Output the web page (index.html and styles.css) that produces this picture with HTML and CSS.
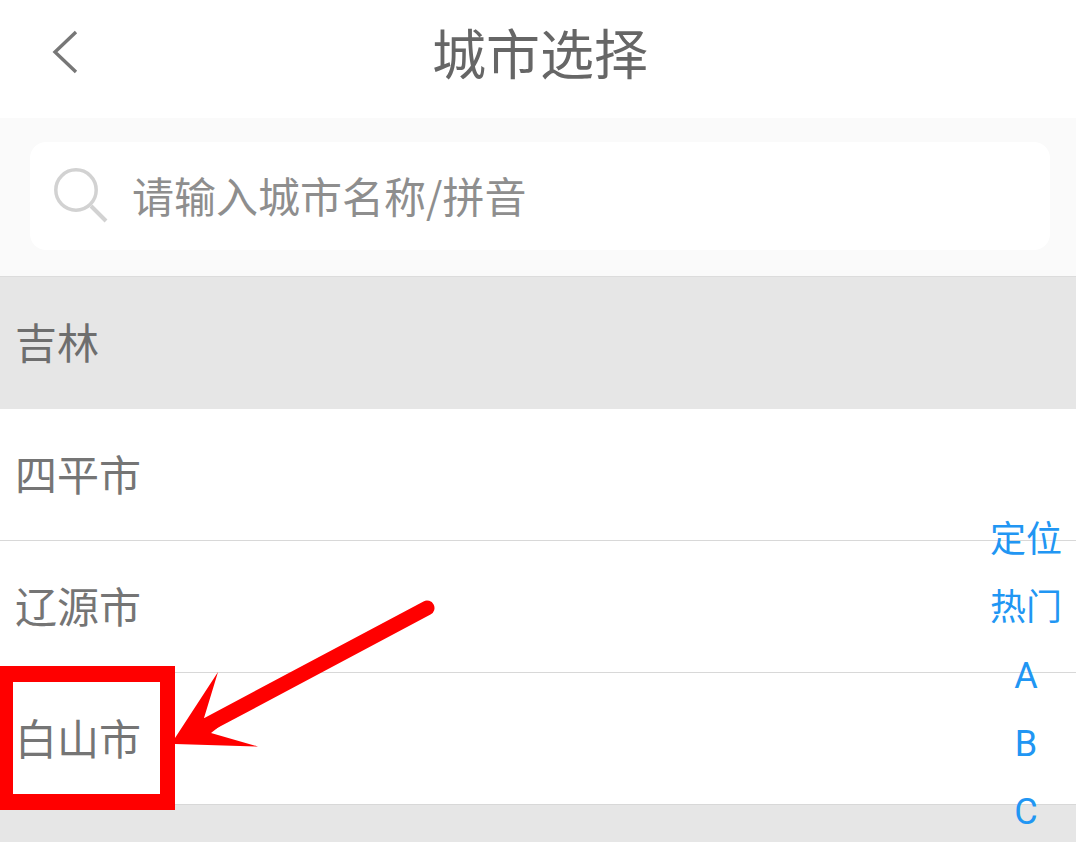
FILE: index.html
```html
<!DOCTYPE html>
<html lang="zh-CN">
<head>
    <meta charset="UTF-8">
    <meta name="viewport" content="width=device-width, initial-scale=1.0">
    <title>城市选择</title>
    <link rel="stylesheet" href="styles.css">
</head>
<body>
    <div class="page">
        <header class="top-bar">
            <svg class="back-icon" width="32" height="48" viewBox="0 0 32 48">
                <path d="M25 4 L4 24 L25 44" fill="none" stroke="#777" stroke-width="3.4"/>
            </svg>
            <h1>城市选择</h1>
        </header>

        <div class="search-area">
            <div class="search-box">
                <svg class="search-icon" width="56" height="56" viewBox="0 0 56 56">
                    <circle cx="22" cy="22" r="20.2" fill="none" stroke="#d2d2d2" stroke-width="3.5"/>
                    <path d="M37 38 L52 53" fill="none" stroke="#d2d2d2" stroke-width="4"/>
                </svg>
                <span class="search-text">请输入城市名称/拼音</span>
            </div>
        </div>

        <div class="city-list">
            <div class="group-title">吉林</div>
            <div class="city-row">四平市</div>
            <div class="city-row">辽源市</div>
            <div class="city-row">白山市</div>
            <div class="group-title"></div>
        </div>

        <!-- 右侧索引 -->
        <ul class="index-bar">
            <li>定位</li>
            <li>热门</li>
            <li>A</li>
            <li>B</li>
            <li>C</li>
        </ul>

        <!-- 红色标注 -->
        <svg class="mark" width="1076" height="842" viewBox="0 0 1076 842">
            <path d="M0 666 H175 V810 H0 Z M13 682 V794 H160 V682 Z" fill="#ff0000" fill-rule="evenodd"/>
            <path d="M427 608 L207 725" fill="none" stroke="#ff0000" stroke-width="15" stroke-linecap="round"/>
            <path d="M175 738 L218 672 L204 718 L225 722 L211 733 L258 746.5 L175 744 Z" fill="#ff0000"/>
        </svg>
    </div>
</body>
</html>
```

FILE: styles.css
```css
* {
    box-sizing: border-box;
}

body {
    margin: 0;
    padding: 0;
    background-color: #fff;
    font-family: "Noto Sans CJK SC", "Liberation Sans", sans-serif;
}

.page {
    position: relative;
    height: 842px;
    overflow: hidden;
}

.top-bar {
    position: relative;
    height: 118px;
    display: flex;
    align-items: center;
    justify-content: center;
    padding-left: 4px;
    padding-bottom: 14px;
    background-color: #fff;
}

.top-bar h1 {
    margin: 0;
    font-size: 54px;
    font-weight: 400;
    line-height: 104px;
    color: #666;
}

.back-icon {
    position: absolute;
    left: 51px;
    top: 28px;
}

.search-area {
    height: 159px;
    padding: 24px 26px 26px 30px;
    background-color: #fafafa;
    border-bottom: 1px solid #dcdcdc;
}

.search-box {
    height: 108px;
    display: flex;
    align-items: center;
    padding-left: 24px;
    background-color: #fff;
    border-radius: 16px;
}

.search-icon {
    margin-right: 22px;
}

.search-text {
    margin-bottom: 3px;
    font-size: 42px;
    color: #8e8e8e;
}

.group-title {
    height: 132px;
    padding-left: 15px;
    background-color: #e6e6e6;
    font-size: 42px;
    line-height: 128px;
    color: #6e6e6e;
}

.city-row {
    height: 132px;
    padding-left: 15px;
    background-color: #fff;
    border-bottom: 1px solid #d8d8d8;
    font-size: 42px;
    line-height: 128px;
    color: #757575;
}

.index-bar {
    position: absolute;
    top: 506px;
    right: 14px;
    width: 72px;
    margin: 0;
    padding: 0;
    list-style: none;
    text-align: center;
    font-family: Roboto, "Noto Sans CJK SC", sans-serif;
    font-size: 36px;
    line-height: 68px;
    color: #2196f3;
}

.mark {
    position: absolute;
    left: 0;
    top: 0;
}
```
